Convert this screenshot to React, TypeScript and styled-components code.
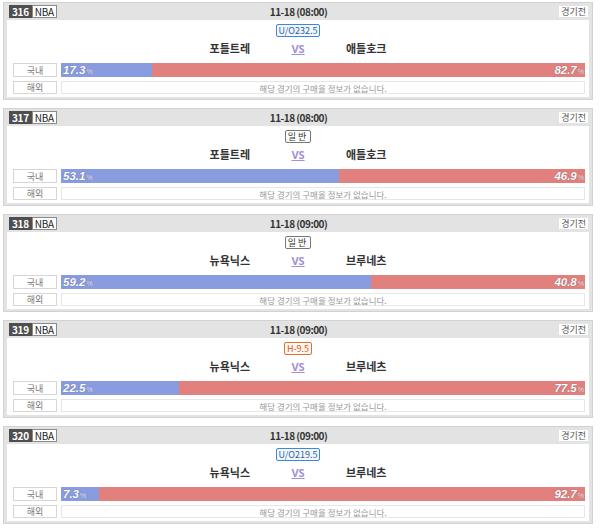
import React from "react";
import styled, { createGlobalStyle } from "styled-components";

const Global = createGlobalStyle`
  html, body { margin: 0; padding: 0; background: #fff; }
  body { font-family: "Noto Sans CJK KR", "Noto Sans", sans-serif; }
`;

const Page = styled.div`
  display: flex;
  flex-direction: column;
  gap: 8px;
  padding: 2px 7px 0 3px;
`;

const Card = styled.div`
  border: 1px solid #d2d2d2;
  background: #e3e3e3;
  padding: 0 3px 2px;
`;

const Header = styled.div`
  height: 17px;
  display: grid;
  grid-template-columns: 1fr auto 1fr;
  align-items: center;
  padding: 0 1px 0 2px;
`;

const Badges = styled.div`
  display: flex;
  align-items: center;
`;

const NumBadge = styled.span`
  background: #4e4e4e;
  color: #fff;
  font: bold 10px/11px "Noto Sans CJK KR", sans-serif;
  letter-spacing: -0.3px;
  padding: 0 2px;
  height: 11px;
  display: inline-flex;
  align-items: center;
  border: 1px solid #4e4e4e;
`;

const LeagueBadge = styled.span`
  background: #fff;
  color: #222;
  font: 10px/11px "Noto Sans CJK KR", sans-serif;
  letter-spacing: -0.3px;
  padding: 0 2px;
  height: 11px;
  display: inline-flex;
  align-items: center;
  border: 1px solid #8a8a8a;
`;

const DateText = styled.div`
  font: bold 10px "Noto Sans CJK KR", sans-serif;
  letter-spacing: -0.5px;
  color: #333;
`;

const Status = styled.span`
  justify-self: end;
  background: #fff;
  color: #555;
  font: 9px/11px "Noto Sans CJK KR", sans-serif;
  padding: 0 2px;
`;

const Body = styled.div`
  background: #fff;
  display: flex;
  flex-direction: column;
  padding: 4px 0 3px;
`;

const BetRow = styled.div`
  display: flex;
  justify-content: center;
  height: 13px;
`;

const tones = {
  blue: { border: "#3d86d8", color: "#2b5f9e", bg: "#f2f7ff" },
  gray: { border: "#777", color: "#333", bg: "#fff" },
  orange: { border: "#e0702e", color: "#d2581c", bg: "#fff7f0" },
};

type Tone = keyof typeof tones;

const BetBadge = styled.span<{ $tone: Tone }>`
  border: 1px solid ${(p) => tones[p.$tone].border};
  color: ${(p) => tones[p.$tone].color};
  background: ${(p) => tones[p.$tone].bg};
  border-radius: 2px;
  font: 9px/11px "Noto Sans CJK KR", sans-serif;
  padding: 0 2px;
  letter-spacing: ${(p) => (p.$tone === "gray" ? "2px" : "0")};
`;

const TeamRow = styled.div`
  height: 22px;
  display: grid;
  grid-template-columns: 1fr 96px 1fr;
  align-items: center;
`;

const Team = styled.div<{ $side: "home" | "away" }>`
  font: bold 11px "Noto Sans CJK KR", sans-serif;
  color: #333;
  text-align: ${(p) => (p.$side === "home" ? "right" : "left")};
`;

const Vs = styled.div`
  text-align: center;
  font: bold 11px "Noto Sans", sans-serif;
  color: #a390d6;
  text-decoration: underline;
`;

const Row = styled.div`
  display: flex;
  gap: 4px;
  padding: 0 4px 0 6px;
  margin-top: 4px;
`;

const Label = styled.div<{ $h: number }>`
  width: 42px;
  height: ${(p) => p.$h - 2}px;
  border: 1px solid #d6d6d6;
  color: #777;
  font: 9px "Noto Sans CJK KR", sans-serif;
  display: flex;
  align-items: center;
  justify-content: center;
`;

const Bar = styled.div`
  flex: 1;
  height: 14px;
  display: flex;
  background: #e2807e;
  position: relative;
`;

const BlueFill = styled.div`
  background: #8a9ce0;
  height: 100%;
`;

const Pct = styled.span<{ $side: "left" | "right" }>`
  position: absolute;
  top: 0;
  ${(p) => (p.$side === "left" ? "left: 2px;" : "right: 1px;")}
  color: #fff;
  font: italic bold 11.5px/14px "Liberation Sans", sans-serif;
  text-shadow: 0 0 1px rgba(60, 60, 90, 0.7);
  small {
    font-size: 7px;
    font-style: normal;
    font-weight: normal;
    color: #f0f0f8;
    margin-left: 1px;
  }
`;

const Info = styled.div`
  flex: 1;
  height: 11px;
  border: 1px solid #e6e6e6;
  color: #999;
  font: 8.5px "Noto Sans CJK KR", sans-serif;
  display: flex;
  align-items: center;
  justify-content: center;
`;

type Game = {
  no: number;
  date: string;
  bet: string;
  tone: Tone;
  home: string;
  away: string;
  h: number;
  a: number;
};

const games: Game[] = [
  { no: 316, date: "11-18 (08:00)", bet: "U/O232.5", tone: "blue", home: "포틀트레", away: "애틀호크", h: 17.3, a: 82.7 },
  { no: 317, date: "11-18 (08:00)", bet: "일반", tone: "gray", home: "포틀트레", away: "애틀호크", h: 53.1, a: 46.9 },
  { no: 318, date: "11-18 (09:00)", bet: "일반", tone: "gray", home: "뉴욕닉스", away: "브루네츠", h: 59.2, a: 40.8 },
  { no: 319, date: "11-18 (09:00)", bet: "H-9.5", tone: "orange", home: "뉴욕닉스", away: "브루네츠", h: 22.5, a: 77.5 },
  { no: 320, date: "11-18 (09:00)", bet: "U/O219.5", tone: "blue", home: "뉴욕닉스", away: "브루네츠", h: 7.3, a: 92.7 },
];

export default function App() {
  return (
    <>
      <Global />
      <Page>
        {games.map((g) => (
          <Card key={g.no}>
            <Header>
              <Badges>
                <NumBadge>{g.no}</NumBadge>
                <LeagueBadge>NBA</LeagueBadge>
              </Badges>
              <DateText>{g.date}</DateText>
              <Status>경기전</Status>
            </Header>
            <Body>
              <BetRow>
                <BetBadge $tone={g.tone}>{g.bet}</BetBadge>
              </BetRow>
              <TeamRow>
                <Team $side="home">{g.home}</Team>
                <Vs>VS</Vs>
                <Team $side="away">{g.away}</Team>
              </TeamRow>
              <Row>
                <Label $h={14}>국내</Label>
                <Bar>
                  <BlueFill style={{ width: `${g.h}%` }} />
                  <Pct $side="left">
                    {g.h}
                    <small>%</small>
                  </Pct>
                  <Pct $side="right">
                    {g.a}
                    <small>%</small>
                  </Pct>
                </Bar>
              </Row>
              <Row>
                <Label $h={13}>해외</Label>
                <Info>해당 경기의 구매율 정보가 없습니다.</Info>
              </Row>
            </Body>
          </Card>
        ))}
      </Page>
    </>
  );
}
